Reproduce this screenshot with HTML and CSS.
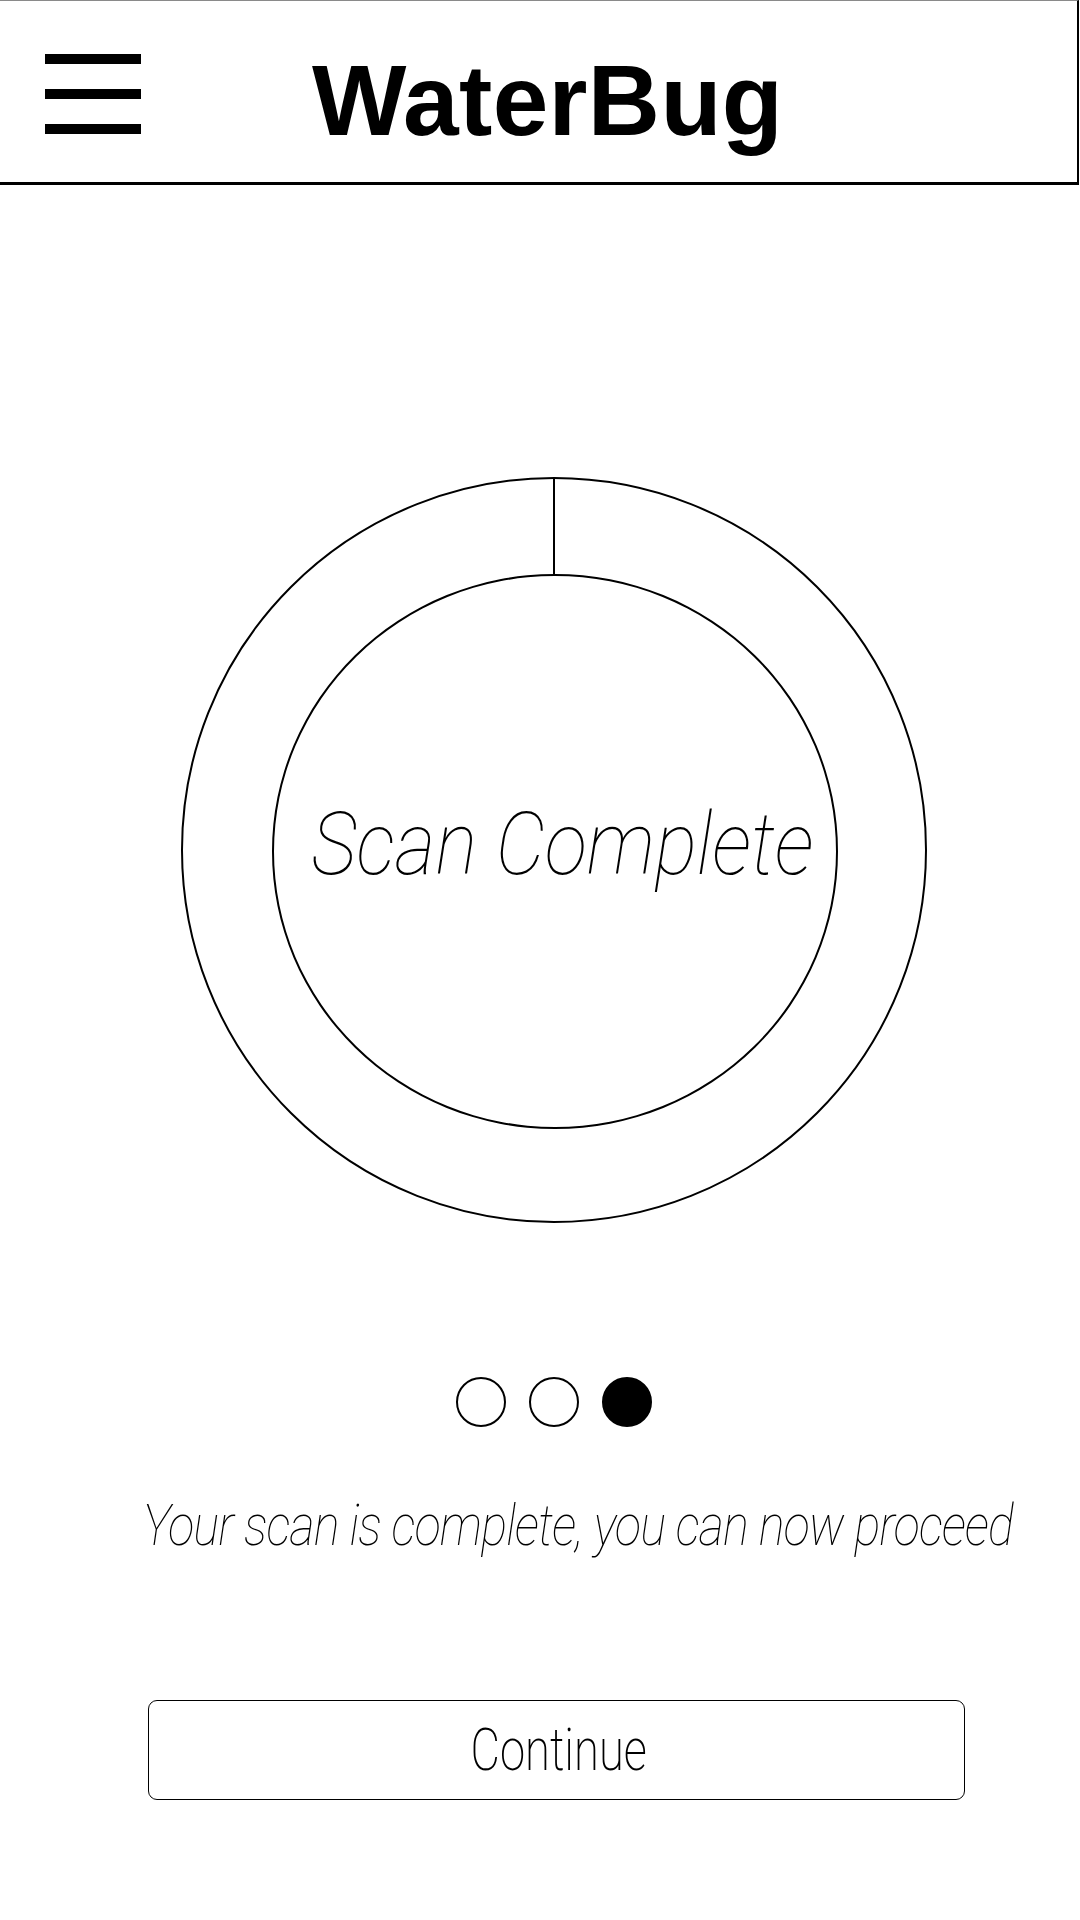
FILE: index.html
```html
<!DOCTYPE html>
<html lang="en">
<head>
<meta charset="utf-8">
<title>WaterBug</title>
<link rel="stylesheet" href="styles.css">
</head>
<body>
<header class="header">
  <div class="menu" aria-label="Menu">
    <span class="bar"></span>
    <span class="bar"></span>
    <span class="bar"></span>
  </div>
  <h1 class="title">WaterBug</h1>
</header>
<main class="main">
  <div class="ring">
    <span class="tick"></span>
    <div class="inner">
      <span class="ring-label">Scan Complete</span>
    </div>
  </div>
  <div class="dots">
    <span class="dot"></span>
    <span class="dot"></span>
    <span class="dot dot-active"></span>
  </div>
  <p class="message"><span class="message-text">Your scan is complete, you can now proceed</span></p>
  <button class="continue" type="button"><span class="continue-text">Continue</span></button>
</main>
</body>
</html>
```
FILE: styles.css
```css
* { box-sizing: border-box; }
html, body {
  margin: 0;
  padding: 0;
  background: #fff;
  color: #000;
}
body {
  width: 1080px;
  font-family: Roboto, "Liberation Sans", sans-serif;
}
.header {
  width: 1079px;
  height: 185px;
  border-top: 1px solid #8a8a8a;
  border-right: 2px solid #000;
  border-bottom: 3px solid #000;
  display: flex;
  align-items: flex-start;
}
.menu {
  margin: 53px 0 0 45px;
  width: 96px;
  display: flex;
  flex-direction: column;
  gap: 25px;
}
.bar {
  display: block;
  height: 10px;
  background: #000;
}
.title {
  margin: 49px 0 0 171px;
  font-family: "Liberation Sans", Arial, sans-serif;
  font-weight: 700;
  font-size: 100px;
  line-height: 100px;
  letter-spacing: 0.35px;
}
.main {
  display: flex;
  flex-direction: column;
  align-items: flex-start;
}
.ring {
  margin: 292px 0 0 181px;
  width: 746px;
  height: 746px;
  border: 2px solid #000;
  border-radius: 50%;
  display: flex;
  flex-direction: column;
  align-items: center;
}
.tick {
  display: block;
  width: 2px;
  height: 95px;
  background: #000;
}
.inner {
  width: 566px;
  height: 555px;
  margin-left: 2px;
  border: 2px solid #000;
  border-radius: 50%;
  display: flex;
  align-items: center;
  justify-content: center;
}
.ring-label {
  display: inline-block;
  padding: 0 0 16px 16px;
  font-size: 88px;
  line-height: 88px;
  font-weight: 100;
  font-style: italic;
  white-space: nowrap;
  transform: scaleX(0.892);
}
.dots {
  align-self: stretch;
  margin-top: 154px;
  padding-left: 28px;
  display: flex;
  justify-content: center;
  gap: 23px;
}
.dot {
  width: 50px;
  height: 50px;
  border: 2px solid #000;
  border-radius: 50%;
}
.dot-active {
  background: #000;
}
.message {
  align-self: stretch;
  margin: 70px 0 0;
  padding-left: 68px;
  text-align: center;
  font-size: 57px;
  line-height: 57px;
  font-weight: 100;
  font-style: italic;
  white-space: nowrap;
}
.message-text {
  display: inline-block;
  transform: scaleX(0.854);
  letter-spacing: -1px;
}
.continue {
  margin: 146px 0 0 148px;
  width: 817px;
  height: 100px;
  padding: 0 0 0 5px;
  border: 1.5px solid #000;
  border-radius: 9px;
  background: #fff;
  color: #000;
  display: flex;
  align-items: center;
  justify-content: center;
  font-family: Roboto, "Liberation Sans", sans-serif;
  font-size: 60px;
  line-height: 60px;
  font-weight: 200;
}
.continue-text {
  display: inline-block;
  transform: scaleX(0.756);
}
```
